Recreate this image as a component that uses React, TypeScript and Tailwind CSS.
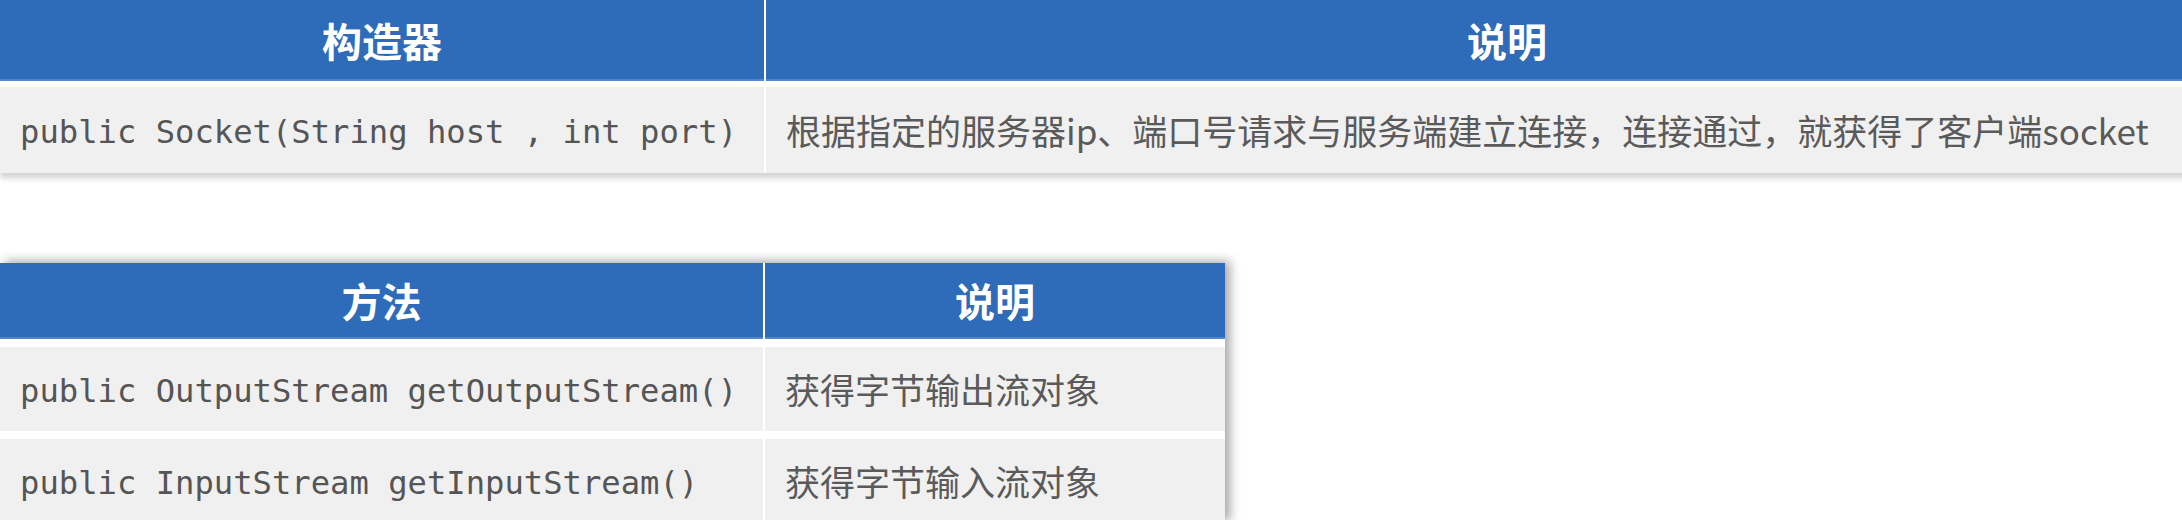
const mono = "font-['DejaVu_Sans_Mono','Liberation_Mono',monospace]";
const cjk = "font-['Noto_Sans_CJK_SC','Noto_Sans',sans-serif]";

interface Row {
    sig: string;
    desc: string;
}

const ctorRows: Row[] = [
    {
        sig: 'public Socket(String host , int port)',
        desc: '根据指定的服务器ip、端口号请求与服务端建立连接，连接通过，就获得了客户端socket',
    },
];

const methodRows: Row[] = [
    { sig: 'public OutputStream getOutputStream()', desc: '获得字节输出流对象' },
    { sig: 'public InputStream getInputStream()', desc: '获得字节输入流对象' },
];

function HeadCell({ children }: { children: string }) {
    return (
        <div
            className={`flex items-center justify-center bg-[#2e6bb8] border-b-2 border-[#4f88cc] text-[40px] font-bold text-white ${cjk}`}
        >
            {children}
        </div>
    );
}

function BodyRow({ row, h }: { row: Row; h: string }) {
    return (
        <>
            <div className={`flex items-center bg-[#f0f0f0] pl-[20px] pt-[4px] ${h}`}>
                <span className={`whitespace-pre text-[32.2px] text-[#555555] ${mono}`}>{row.sig}</span>
            </div>
            <div className={`flex items-center bg-[#f0f0f0] pl-[20px] ${h}`}>
                <span className={`whitespace-nowrap text-[35px] text-[#5a5a5a] ${cjk}`}>{row.desc}</span>
            </div>
        </>
    );
}

export default function App() {
    return (
        <div className="h-[520px] w-[2182px] overflow-hidden bg-white">
            {/* 构造器 */}
            <div className="grid w-[2248px] grid-cols-[764px_1fr] grid-rows-[81px_86px] gap-x-[2px] gap-y-[6px] bg-white shadow-[0_5px_6px_rgba(0,0,0,0.18)]">
                <HeadCell>构造器</HeadCell>
                <HeadCell>说明</HeadCell>
                {ctorRows.map((r, i) => (
                    <BodyRow key={i} row={r} h="h-[86px]" />
                ))}
            </div>

            {/* 方法 */}
            <div className="mt-[90px] grid w-[1225px] grid-cols-[763px_1fr] grid-rows-[76px_84px_84px] gap-x-[2px] gap-y-[8px] bg-white shadow-[5px_-2px_10px_rgba(0,0,0,0.35)]">
                <HeadCell>方法</HeadCell>
                <HeadCell>说明</HeadCell>
                {methodRows.map((r, i) => (
                    <BodyRow key={i} row={r} h="h-[84px]" />
                ))}
            </div>
        </div>
    );
}
